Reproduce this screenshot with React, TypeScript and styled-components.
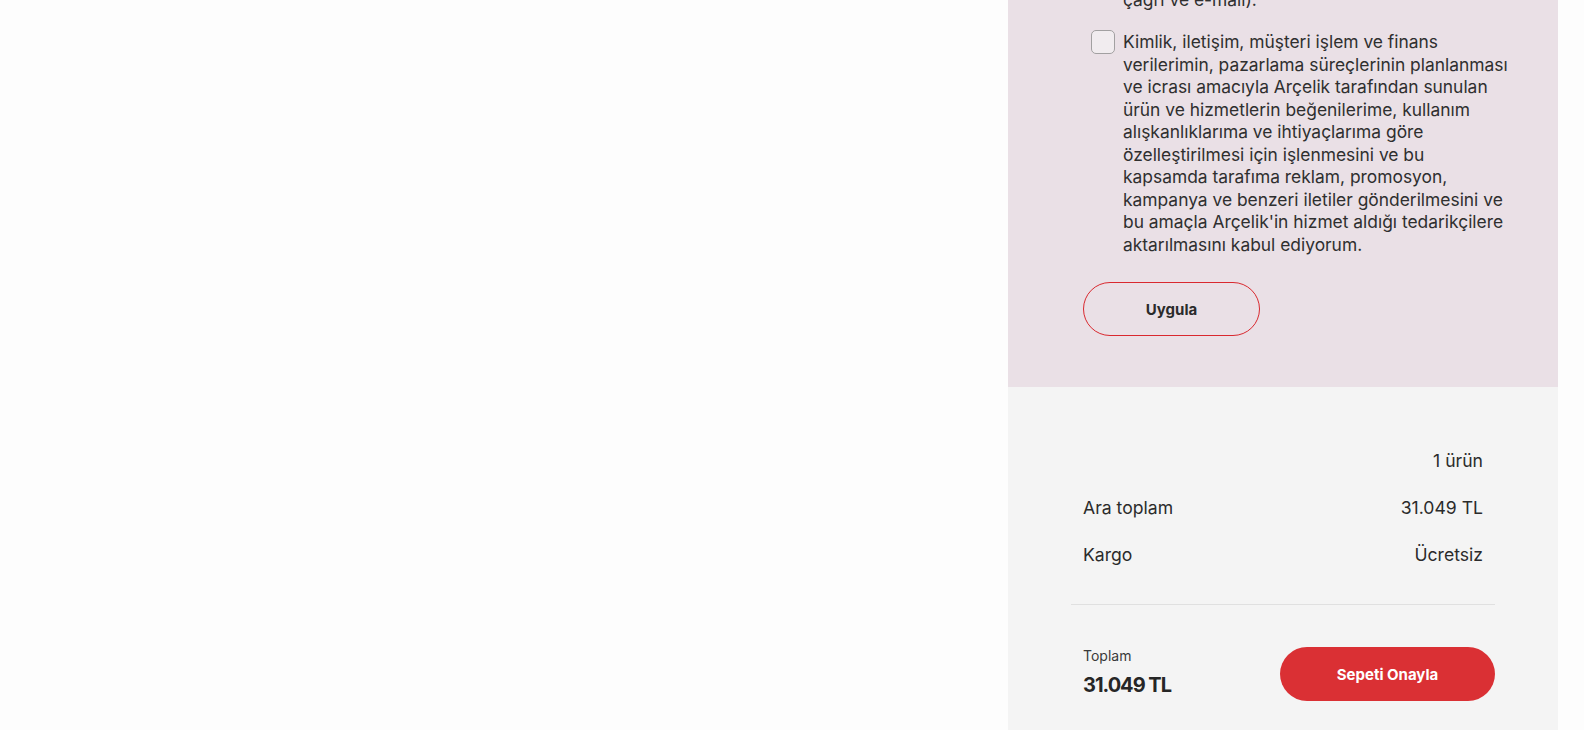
import React from "react";
import styled, { createGlobalStyle } from "styled-components";

const GlobalStyle = createGlobalStyle`
  html, body {
    margin: 0;
    padding: 0;
    background: #fdfdfd;
    font-family: "Inter", "Roboto", "Liberation Sans", sans-serif;
    color: #2b2b2b;
  }
  * { box-sizing: border-box; }
`;

const Page = styled.div`
  display: flex;
  height: 730px;
  overflow: hidden;
  padding-right: 26px;
`;

const Main = styled.div`
  flex: 1;
`;

const Panel = styled.aside`
  width: 550px;
  display: flex;
  flex-direction: column;
  justify-content: flex-end;
  overflow: hidden;
`;

const ConsentSection = styled.section`
  background: #eae0e6;
  padding: 0 40px 51px 75px;
  display: flex;
  flex-direction: column;
  align-items: flex-start;
`;

const ConsentList = styled.div`
  display: flex;
  flex-direction: column;
  gap: 20px;
  padding-left: 8px;
`;

const ConsentItem = styled.label`
  display: flex;
  align-items: flex-start;
  gap: 8px;
`;

const Checkbox = styled.span`
  flex: none;
  width: 24px;
  height: 24px;
  margin-top: -1px;
  border: 1px solid #a2a0a1;
  border-radius: 5px;
  background: #f1ecef;
`;

const ConsentText = styled.p`
  margin: 0;
  font-size: 17.4px;
  line-height: 22.5px;
  color: #2f2f2f;
  white-space: nowrap;
`;

const OutlineButton = styled.button`
  margin-top: 26px;
  width: 177px;
  height: 54px;
  border: 1px solid #d9292f;
  border-radius: 27px;
  background: transparent;
  font-family: inherit;
  font-size: 15px;
  font-weight: 700;
  color: #2b2b2b;
  cursor: pointer;
`;

const SummarySection = styled.section`
  background: #f4f4f4;
  padding: 62px 63px 29px;
  display: flex;
  flex-direction: column;
`;

const Rows = styled.div`
  display: flex;
  flex-direction: column;
  gap: 23px;
  padding: 0 12px;
`;

const Row = styled.div<{ $end?: boolean }>`
  display: flex;
  justify-content: ${(p) => (p.$end ? "flex-end" : "space-between")};
  font-size: 17.6px;
  line-height: 24px;
  color: #2b2b2b;
`;

const Divider = styled.hr`
  margin: 37px 0 0;
  border: none;
  border-top: 1px solid #e0e0e0;
`;

const Footer = styled.div`
  margin-top: 42px;
  display: flex;
  align-items: flex-start;
  justify-content: space-between;
  padding-left: 12px;
`;

const TotalBlock = styled.div`
  display: flex;
  flex-direction: column;
  gap: 6.5px;
`;

const TotalLabel = styled.span`
  font-size: 14px;
  line-height: 17px;
  color: #3a3a3a;
`;

const TotalValue = styled.span`
  font-size: 20px;
  line-height: 28px;
  font-weight: 700;
  color: #262626;
  letter-spacing: -1px;
`;

const PrimaryButton = styled.button`
  width: 215px;
  height: 54px;
  border: none;
  border-radius: 27px;
  background: #da3034;
  color: #ffffff;
  font-family: inherit;
  font-size: 15px;
  font-weight: 700;
  cursor: pointer;
`;

const consents: string[][] = [
  [
    "Arçelik tarafından kampanya, promosyon ve",
    "benzeri ticari elektronik iletilerin tarafıma",
    "gönderilmesini kabul ediyorum (SMS, sesli",
    "çağrı ve e-mail).",
  ],
  [
    "Kimlik, iletişim, müşteri işlem ve finans",
    "verilerimin, pazarlama süreçlerinin planlanması",
    "ve icrası amacıyla Arçelik tarafından sunulan",
    "ürün ve hizmetlerin beğenilerime, kullanım",
    "alışkanlıklarıma ve ihtiyaçlarıma göre",
    "özelleştirilmesi için işlenmesini ve bu",
    "kapsamda tarafıma reklam, promosyon,",
    "kampanya ve benzeri iletiler gönderilmesini ve",
    "bu amaçla Arçelik'in hizmet aldığı tedarikçilere",
    "aktarılmasını kabul ediyorum.",
  ],
];

export default function App() {
  return (
    <>
      <GlobalStyle />
      <Page>
        <Main />
        <Panel>
          <ConsentSection>
            <ConsentList>
              {consents.map((lines, i) => (
                <ConsentItem key={i}>
                  <Checkbox />
                  <ConsentText>
                    {lines.map((l, j) => (
                      <React.Fragment key={j}>
                        {l}
                        {j < lines.length - 1 && <br />}
                      </React.Fragment>
                    ))}
                  </ConsentText>
                </ConsentItem>
              ))}
            </ConsentList>
            <OutlineButton>Uygula</OutlineButton>
          </ConsentSection>
          <SummarySection>
            <Rows>
              <Row $end>
                <span>1 ürün</span>
              </Row>
              <Row>
                <span>Ara toplam</span>
                <span>31.049 TL</span>
              </Row>
              <Row>
                <span>Kargo</span>
                <span>Ücretsiz</span>
              </Row>
            </Rows>
            <Divider />
            <Footer>
              <TotalBlock>
                <TotalLabel>Toplam</TotalLabel>
                <TotalValue>31.049 TL</TotalValue>
              </TotalBlock>
              <PrimaryButton>Sepeti Onayla</PrimaryButton>
            </Footer>
          </SummarySection>
        </Panel>
      </Page>
    </>
  );
}
